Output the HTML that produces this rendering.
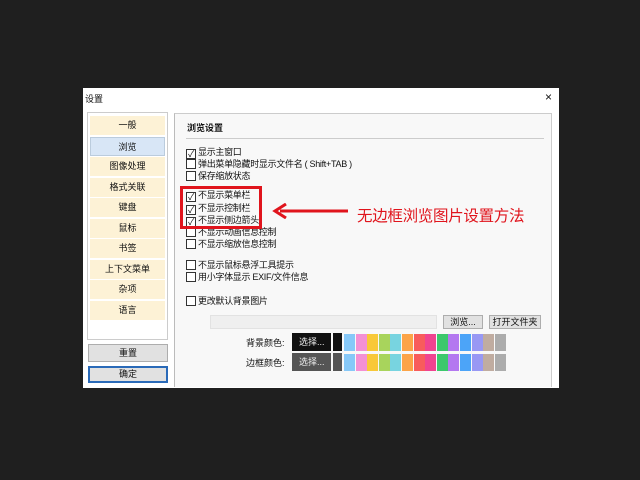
<!DOCTYPE html>
<html><head><meta charset="utf-8"><style>
*{margin:0;padding:0;box-sizing:border-box}
body{width:640px;height:480px;background:#1f1f1f;position:relative;overflow:hidden;font-family:"Liberation Sans","Noto Sans CJK SC",sans-serif;font-size:9px;color:#111}
.a{position:absolute}
.dlg{left:83px;top:88px;width:476px;height:300px;background:#fff}
.item{position:absolute;left:90px;width:75px;height:19px;background:#fdf2d6;text-align:center;line-height:19px;font-size:9px}
.cb{position:absolute;left:186px;font-size:9px;line-height:11px;white-space:nowrap;letter-spacing:-0.3px}
.cb i{display:inline-block;width:10px;height:10px;border:1px solid #333;background:#fff;vertical-align:-2px;margin-right:2px;font-style:normal;font-size:9px;line-height:8px;text-align:center}
.sw{position:absolute;width:11px;height:17px}
.btn{position:absolute;border:1px solid #adadad;background:#e1e1e1;text-align:center;font-size:9px}
</style></head><body>
<div class="a dlg"></div>
<div class="a" style="left:85px;top:92px;font-size:9px">设置</div>
<div class="a" style="left:545px;top:90px;font-size:12px">×</div>
<div class="a" style="left:87px;top:112px;width:81px;height:228px;border:1px solid #ccc;background:#fff"></div>
<div class="item" style="top:116px">一般</div>
<div class="item" style="top:137px;background:#d8e6f6;border:1px solid #bcd">浏览</div>
<div class="item" style="top:157px">图像处理</div>
<div class="item" style="top:178px">格式关联</div>
<div class="item" style="top:198px">键盘</div>
<div class="item" style="top:219px">鼠标</div>
<div class="item" style="top:239px">书签</div>
<div class="item" style="top:260px">上下文菜单</div>
<div class="item" style="top:280px">杂项</div>
<div class="item" style="top:301px">语言</div>
<div class="btn" style="left:88px;top:344px;width:80px;height:18px;line-height:16px">重置</div>
<div class="btn" style="left:88px;top:366px;width:80px;height:17px;line-height:13px;border:2px solid #2a6ab8">确定</div>
<div class="a" style="left:174px;top:113px;width:378px;height:274px;border-left:1px solid #bbb;border-top:1px solid #ccc;border-right:1px solid #ccc;background:#f8f8f8"></div>
<div class="a" style="left:187px;top:121px;font-size:9px;font-weight:bold">浏览设置</div>
<div class="a" style="left:186px;top:138px;width:358px;height:1px;background:#ccc"></div>
<div class="cb" style="top:147px"><i>✓</i>显示主窗口</div>
<div class="cb" style="top:159px"><i></i>弹出菜单隐藏时显示文件名 ( Shift+TAB )</div>
<div class="cb" style="top:171px"><i></i>保存缩放状态</div>
<div class="cb" style="top:190px"><i>✓</i>不显示菜单栏</div>
<div class="cb" style="top:203px"><i>✓</i>不显示控制栏</div>
<div class="cb" style="top:215px"><i>✓</i>不显示侧边箭头</div>
<div class="cb" style="top:227px"><i></i>不显示动画信息控制</div>
<div class="cb" style="top:239px"><i></i>不显示缩放信息控制</div>
<div class="cb" style="top:260px"><i></i>不显示鼠标悬浮工具提示</div>
<div class="cb" style="top:272px"><i></i>用小字体显示 EXIF/文件信息</div>
<div class="cb" style="top:296px"><i></i>更改默认背景图片</div>
<div class="a" style="left:180px;top:186px;width:82px;height:43px;border:3px solid #e0141c"></div>
<svg class="a" style="left:272px;top:203px" width="80" height="16"><line x1="8" y1="8" x2="76" y2="8" stroke="#e0141c" stroke-width="3"/><path d="M14 1 L3 8 L14 15" fill="none" stroke="#e0141c" stroke-width="3"/></svg>
<div class="a" style="left:357px;top:204px;font-size:15.5px;color:#e0141c;letter-spacing:-0.3px">无边框浏览图片设置方法</div>
<div class="a" style="left:210px;top:315px;width:227px;height:14px;background:#efefef;border:1px solid #e2e2e2"></div>
<div class="btn" style="left:443px;top:315px;width:40px;height:14px;line-height:12px">浏览...</div>
<div class="btn" style="left:489px;top:315px;width:52px;height:14px;line-height:12px">打开文件夹</div>
<div class="a" style="left:246px;top:336px;font-size:9px">背景颜色:</div>
<div class="a" style="left:246px;top:356px;font-size:9px">边框颜色:</div>
<div class="a" style="left:292px;top:333px;width:39px;height:18px;background:#111;color:#eee;line-height:18px;padding-left:7px">选择...</div>
<div class="a" style="left:333px;top:333px;width:9px;height:18px;background:#111"></div>
<div class="a" style="left:292px;top:353px;width:39px;height:18px;background:#555;color:#eee;line-height:18px;padding-left:7px">选择...</div>
<div class="a" style="left:333px;top:353px;width:9px;height:18px;background:#555"></div>
<div id="s"></div>
<script>
var c=["#86c8f8","#f490d4","#f8c838","#a8d45c","#78d4e0","#fca448","#f85c5c","#f04490","#3cc86c","#b478f0","#4ca4f8","#9898f4","#c0aca0","#acacac"];
var h="";for(var i=0;i<c.length;i++){var x=344+i*11.6;h+='<div class="sw" style="left:'+x+'px;top:334px;background:'+c[i]+'"></div><div class="sw" style="left:'+x+'px;top:354px;background:'+c[i]+'"></div>';}
document.getElementById("s").innerHTML=h;
</script>
</body></html>
